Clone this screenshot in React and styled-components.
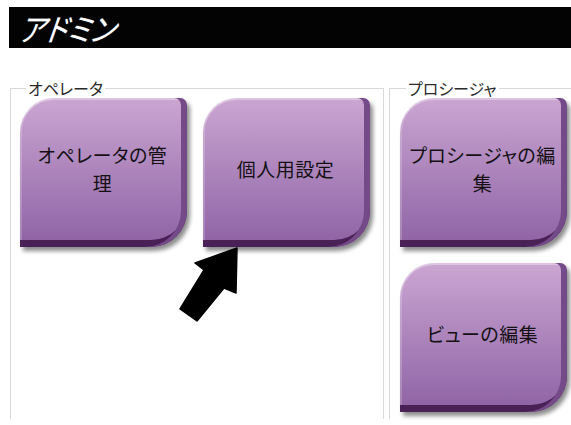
import React from 'react';
import styled, { createGlobalStyle } from 'styled-components';

const GlobalStyle = createGlobalStyle`
  html, body {
    margin: 0;
    padding: 0;
    background: #fff;
    overflow: hidden;
  }
  body {
    font-family: "Noto Sans CJK JP", "Noto Sans", sans-serif;
  }
`;

const Page = styled.div`
  position: relative;
  width: 571px;
  height: 425px;
  padding: 7px 0 0 9px;
  box-sizing: border-box;
  overflow: hidden;
`;

const TitleBar = styled.div`
  height: 41px;
  background: #030303;
  display: flex;
  align-items: center;
  padding-left: 11px;
`;

const Title = styled.h1`
  margin: 0;
  color: #fff;
  font-size: 31px;
  font-weight: 400;
  font-style: italic;
  line-height: 1;
  font-feature-settings: "palt";
  transform: scaleX(0.9) skewX(-8deg);
  transform-origin: left center;
  text-shadow: 0 0 1px rgba(200, 220, 255, 0.6);
`;

const Groups = styled.div`
  display: flex;
  gap: 5px;
  margin-top: 31px;
  margin-left: 1px;
`;

const Group = styled.fieldset`
  margin: 0;
  min-inline-size: 0;
  border: 1px solid #d8d8d8;
  border-bottom: none;
  padding: 1px 0 0 ${({ $inset }) => $inset}px;
  width: ${({ $width }) => $width}px;
  height: 340px;
  box-sizing: border-box;
  flex-shrink: 0;
`;

const Legend = styled.legend`
  margin-left: 6px;
  padding: 0 2px;
  font-size: 16px;
  line-height: 18px;
  color: #2a2a2a;
  font-feature-settings: "palt";
`;

const Row = styled.div`
  display: flex;
  gap: 16px;
`;

const Column = styled.div`
  display: flex;
  flex-direction: column;
  gap: 16px;
`;

const Tile = styled.button`
  width: 167px;
  height: 149px;
  padding: 0 6px 8px 4px;
  border: none;
  border-radius: 34px 7px 36px 0;
  background: linear-gradient(180deg, #cba6d2 0%, #b58ec2 35%, #9d73b0 75%, #8e62a2 100%);
  box-shadow:
    inset -6px 0 0 #744a88,
    inset 0 -7px 0 #4a2157,
    inset 0 2px 0 rgba(255, 255, 255, 0.35),
    inset 2px 0 0 rgba(255, 255, 255, 0.2),
    3px 4px 4px rgba(0, 0, 0, 0.45);
  display: flex;
  align-items: center;
  justify-content: center;
  text-align: center;
  font-family: "Noto Sans CJK JP", "Noto Sans", sans-serif;
  font-size: 19px;
  line-height: 28px;
  color: #141014;
  font-feature-settings: "palt";
  letter-spacing: 0.5px;
  cursor: pointer;
`;

const Pointer = styled.svg`
  position: absolute;
  left: 175px;
  top: 244px;
  width: 66px;
  height: 82px;
`;

export default function App() {
  return (
    <>
      <GlobalStyle />
      <Page>
        <TitleBar>
          <Title>アドミン</Title>
        </TitleBar>
        <Groups>
          <Group $width={374} $inset={9}>
            <Legend>オペレータ</Legend>
            <Row>
              <Tile>オペレータの管<br />理</Tile>
              <Tile>個人用設定</Tile>
            </Row>
          </Group>
          <Group $width={200} $inset={10}>
            <Legend>プロシージャ</Legend>
            <Column>
              <Tile>プロシージャの編<br />集</Tile>
              <Tile>ビューの編集</Tile>
            </Column>
          </Group>
        </Groups>
        <Pointer viewBox="175 244 66 82">
          <polygon
            points="237,248 195,263 204,270 180,309 197,321 224,288 236,293"
            fill="#000"
            stroke="#000"
            strokeWidth="1.5"
            strokeLinejoin="round"
          />
        </Pointer>
      </Page>
    </>
  );
}
